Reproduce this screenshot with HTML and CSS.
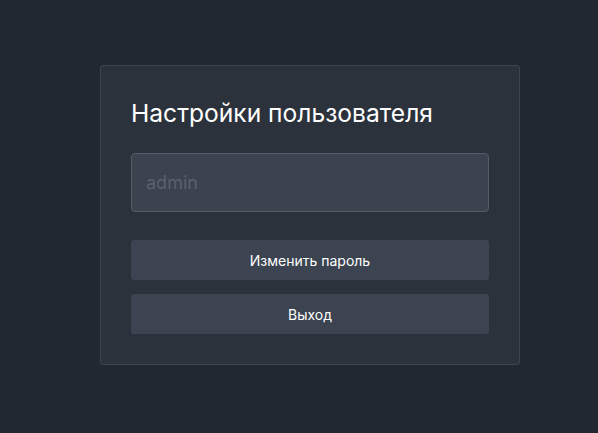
FILE: index.html
```html
<!DOCTYPE html>
<html lang="ru">
<head>
<meta charset="utf-8">
<link rel="stylesheet" href="styles.css">
</head>
<body>
<main class="page">
  <section class="card">
    <h1 class="title">Настройки пользователя</h1>
    <input class="field" type="text" placeholder="admin">
    <div class="actions">
      <button class="btn" type="button">Изменить пароль</button>
      <button class="btn" type="button">Выход</button>
    </div>
  </section>
</main>
</body>
</html>
```

FILE: styles.css
```css
html, body {
  margin: 0;
  padding: 0;
  background: #222831;
  font-family: Inter, Roboto, "Noto Sans", sans-serif;
}
.page {
  width: 598px;
  height: 433px;
  padding-top: 65px;
  padding-left: 100px;
  box-sizing: border-box;
}
.card {
  width: 420px;
  height: 300px;
  box-sizing: border-box;
  background: #2c323c;
  border: 1px solid #3e444d;
  border-radius: 3px;
  padding: 33px 30px 30px;
  display: flex;
  flex-direction: column;
}
.title {
  margin: 0;
  font-size: 24.6px;
  font-weight: 400;
  line-height: 29px;
  color: #ffffff;
}
.field {
  margin-top: 25px;
  height: 59px;
  box-sizing: border-box;
  width: 100%;
  background: #3b434e;
  border: 1px solid #545c67;
  border-radius: 4px;
  padding: 0 14px;
  font-family: Inter, Roboto, "Noto Sans", sans-serif;
  font-size: 18px;
  color: #ffffff;
  outline: none;
}
.field::placeholder {
  color: #59616c;
}
.actions {
  margin-top: 28px;
  display: flex;
  flex-direction: column;
  gap: 14px;
}
.btn {
  height: 40px;
  width: 100%;
  background: #3b4450;
  border: none;
  border-radius: 3px;
  color: #ffffff;
  font-family: Inter, Roboto, "Noto Sans", sans-serif;
  font-size: 14px;
  padding: 0;
  cursor: pointer;
}
```
